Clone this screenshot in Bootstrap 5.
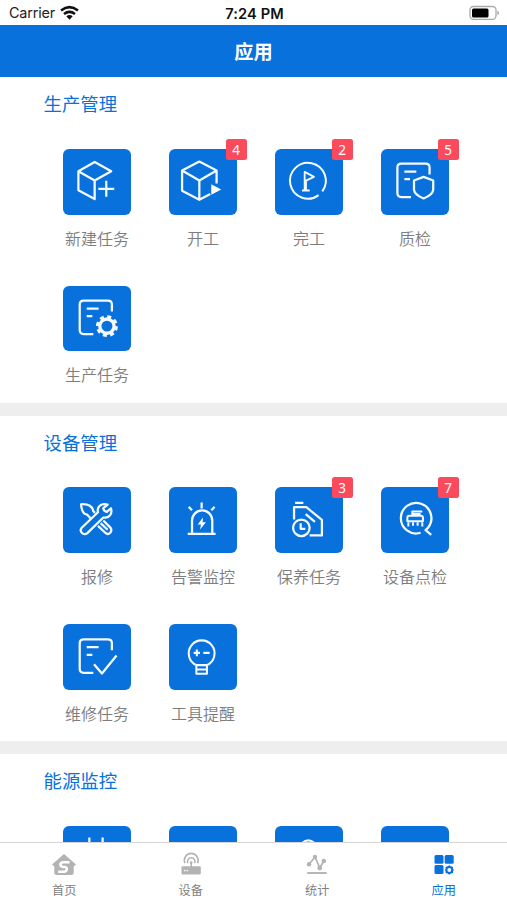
<!DOCTYPE html>
<html lang="zh-CN">
<head>
<meta charset="utf-8">
<meta name="viewport" content="width=device-width, initial-scale=1">
<title>应用</title>
<link href="https://cdn.jsdelivr.net/npm/bootstrap@5.3.0/dist/css/bootstrap.min.css" rel="stylesheet">
<style>
  :root { --brand: #0871dc; }
  body { font-family: "Liberation Sans", "Noto Sans CJK SC", sans-serif; height: 900px; background: #fff; }
  .status-bar { height: 25.3px; padding: 0 7px 0 9px; font-family: Inter, sans-serif; color: #222; font-size: 14.4px; line-height: 27px; }
  .status-bar > div { flex: 1 1 0; }
  .carrier { letter-spacing: -.15px; }
  .clock { font-weight: 600; font-size: 14.6px; letter-spacing: .1px; color: #111; padding-top: 1px; }
  .title-bar { height: 52px; padding-top: 3px; background: var(--brand); font-size: 19.2px; line-height: 1; }
  .group-block { height: 338.5px; border-bottom: 13.5px solid #eee; }
  .group-title { padding: 13px 0 0 43.5px; height: 71.7px; font-size: 18.4px; line-height: 26px; color: var(--brand); font-family: "Noto Sans CJK SC", sans-serif; }
  .app-grid { width: 424px; margin-left: 44px; }
  .app-item { height: 136.7px; color: #7d7d7d; font-size: 16px; }
  .tile { width: 67.3px; height: 65.7px; border-radius: 6px; background: var(--brand); }
  .tile svg { width: 100%; height: 100%; display: block; fill: none; stroke: #f4faff; stroke-width: 6.8; stroke-linejoin: round; stroke-linecap: butt; }
  .app-name { padding-top: 11px; line-height: 24px; font-family: "Noto Sans CJK SC", sans-serif; font-weight: 350; }
  .count { top: -10px; right: -10px; width: 21px; height: 21px; border-radius: 2.5px; background: #fb4a5b; color: #fff; font: 13.5px/22px "Noto Sans", sans-serif; text-align: center; }
  .tabs-bottom { height: 58.5px; padding-left: 1px; border-top: 1px solid #d6d6d6; color: #7f7f7f; font-size: 12.2px; }
  .tabs-bottom a { color: inherit; padding-top: 9px; line-height: 18px; }
  .tabs-bottom a.current { color: var(--brand); }
  .tabs-bottom svg { width: 26px; height: 26px; display: block; margin-bottom: 4px; }
</style>
<script src="https://cdn.jsdelivr.net/npm/bootstrap@5.3.0/dist/js/bootstrap.bundle.min.js"></script>
</head>
<body class="d-flex flex-column overflow-hidden">
<svg class="d-none">
  <symbol id="doc" viewBox="0 0 202 198">
    <path d="M147 77V56Q147 44 135 44H62Q50 44 50 56V133Q50 145 62 145H91M71 68H107M71 91H88"/>
  </symbol>
</svg>

<header class="flex-shrink-0">
  <div class="status-bar d-flex">
    <div class="d-flex align-items-center"><span class="carrier">Carrier</span>
      <svg class="ms-1" width="21" height="16" viewBox="0 0 21 16" fill="none" stroke="#111" stroke-width="2.500"><path d="M2 5.500Q10.500-1.300 19 5.500M5 9Q10.500 4.700 16 9"/><path d="M7.300 11.200Q10.500 8.900 13.700 11.200L10.500 14.700Z" fill="#111" stroke="none"/></svg>
    </div>
    <div class="clock text-center text-nowrap">7:24 PM</div>
    <div class="d-flex align-items-center justify-content-end">
      <svg width="31" height="16" viewBox="0 0 31 16"><rect x="1" y="1.500" width="26" height="12.800" rx="3.500" fill="#fff" stroke="#aaa" stroke-width="1.300"/><rect x="3" y="3.500" width="16.500" height="8.900" rx="1.500"/><path d="M28.500 5.500q3 2.400 0 4.800z" fill="#999"/></svg>
    </div>
  </div>
  <h1 class="title-bar m-0 text-white fw-bold d-flex align-items-center justify-content-center">应用</h1>
</header>

<main class="flex-grow-1 overflow-hidden" style="min-height:0">
  <section class="group-block">
    <h2 class="group-title m-0 fw-normal">生产管理</h2>
    <div class="app-grid row row-cols-4 g-0">
      <div class="col app-item d-flex flex-column align-items-center">
        <div class="tile"><svg viewBox="0 0 202 198"><path d="M95 39L145 67L95 95L46 67ZM46 67V124L95 151V95M130 96V144M106 120H154"/></svg></div>
        <div class="app-name">新建任务</div>
      </div>
      <div class="col app-item d-flex flex-column align-items-center">
        <div class="tile position-relative"><svg viewBox="0 0 202 198"><path d="M143 104V65L91 38L39 65V126L91 153L124 136M39 65L91 95L143 65M91 95V153"/><path d="M127 106L157 122L127 138Z" fill="#fff" stroke="none"/></svg><span class="count position-absolute">4</span></div>
        <div class="app-name">开工</div>
      </div>
      <div class="col app-item d-flex flex-column align-items-center">
        <div class="tile position-relative"><svg viewBox="0 0 202 198"><path d="M142 128A54 54 0 1 0 131 139" stroke-width="6"/><path d="M89 125V69L117 84L90 97M93 97V125M81 125H104" stroke-width="5.500"/></svg><span class="count position-absolute">2</span></div>
        <div class="app-name">完工</div>
      </div>
      <div class="col app-item d-flex flex-column align-items-center">
        <div class="tile position-relative"><svg viewBox="0 0 202 198"><use href="#doc" x="-1" width="202" height="198"/><path d="M128 84L157 95V123Q155 138 128 149Q101 138 99 123V95Z"/></svg><span class="count position-absolute">5</span></div>
        <div class="app-name">质检</div>
      </div>
      <div class="col app-item d-flex flex-column align-items-center">
        <div class="tile"><svg viewBox="0 0 202 198"><use href="#doc" width="202" height="198"/><circle cx="132" cy="121" r="21.500" stroke-width="10"/><circle cx="132" cy="121" r="28.500" stroke-width="9" stroke-dasharray="12 10.380"/></svg></div>
        <div class="app-name">生产任务</div>
      </div>
    </div>
  </section>

  <section class="group-block">
    <h2 class="group-title m-0 fw-normal">设备管理</h2>
    <div class="app-grid row row-cols-4 g-0">
      <div class="col app-item d-flex flex-column align-items-center">
        <div class="tile"><svg viewBox="0 0 202 198"><path d="M56 123L105 76C101 58 115 48 134 53L121 64Q123 74 132 75L144 64C150 82 137 95 121 92L73 139C62 148 47 134 56 123Z"/><path d="M83 95L72 83C60 82 55 65 54 52C72 51 88 55 91 73L96 78M105 117L127 138Q135 145 142 138Q149 129 141 121L121 101M113 109L134 129"/></svg></div>
        <div class="app-name">报修</div>
      </div>
      <div class="col app-item d-flex flex-column align-items-center">
        <div class="tile"><svg viewBox="0 0 202 198"><path d="M69 141V101A30.500 30.500 0 0 1 130 101V141M56 141H140M98 47V65M59 60L69 70M137 60L127 70"/><path d="M102 92L86 113H96L93 128L111 106H101Z" fill="#fff" stroke="none"/></svg></div>
        <div class="app-name">告警监控</div>
      </div>
      <div class="col app-item d-flex flex-column align-items-center">
        <div class="tile position-relative"><svg viewBox="0 0 202 198"><path d="M60 48H85M57 98V61H94L141 99V146H104M92 82L120 105"/><circle cx="79" cy="123" r="25"/><path d="M77 109V126H91"/></svg><span class="count position-absolute">3</span></div>
        <div class="app-name">保养任务</div>
      </div>
      <div class="col app-item d-flex flex-column align-items-center">
        <div class="tile position-relative"><svg viewBox="0 0 202 198"><path d="M119 138A46 46 0 1 1 142 122L134 130L151 144"/><path d="M94 87V74H124M97 81H119M79 103V93Q79 87 85 87H120Q126 87 126 93V103ZM82 107V119M96 107V117M110 107V117M124 107V119" stroke-width="6"/></svg><span class="count position-absolute">7</span></div>
        <div class="app-name">设备点检</div>
      </div>
      <div class="col app-item d-flex flex-column align-items-center">
        <div class="tile"><svg viewBox="0 0 202 198"><use href="#doc" y="2" width="202" height="198"/><path d="M93 121L117 149L161 95"/></svg></div>
        <div class="app-name">维修任务</div>
      </div>
      <div class="col app-item d-flex flex-column align-items-center">
        <div class="tile"><svg viewBox="0 0 202 198"><path d="M82 124A39 39 0 1 1 114 124V150H82ZM82 124H114M82 137H114M74 87H93M83.500 77V97M103 87H122" stroke-width="6.200"/></svg></div>
        <div class="app-name">工具提醒</div>
      </div>
    </div>
  </section>

  <section>
    <h2 class="group-title m-0 fw-normal">能源监控</h2>
    <div class="app-grid row row-cols-4 g-0">
      <div class="col app-item d-flex flex-column align-items-center"><div class="tile"><svg viewBox="0 0 202 198"><path d="M79 35V65M119 35V65M60 65H138V90A39 39 0 0 1 60 90Z"/></svg></div></div>
      <div class="col app-item d-flex flex-column align-items-center"><div class="tile"></div></div>
      <div class="col app-item d-flex flex-column align-items-center"><div class="tile"><svg viewBox="0 0 202 198"><circle cx="100" cy="66" r="23"/></svg></div></div>
      <div class="col app-item d-flex flex-column align-items-center"><div class="tile"></div></div>
    </div>
  </section>
</main>

<nav class="tabs-bottom bg-white flex-shrink-0 row row-cols-4 g-0">
  <a href="#" class="col d-flex flex-column align-items-center text-decoration-none">
    <svg viewBox="0 0 26 26"><path d="M13 2L25 12.500L23.500 14H22.700V20.500Q22.700 23 20.200 23H5.800Q3.300 23 3.300 20.500V14H2.500L1 12.500Z" fill="#b3b3b3"/><path d="M18.500 10.200H12.500Q9.400 10.200 9.400 12.500Q9.400 14.600 12 14.900H13.700Q16.300 15.200 15.800 17.600Q15.300 19.800 12.800 19.800H7.200" fill="none" stroke="#fff" stroke-width="2.500"/></svg>首页</a>
  <a href="#" class="col d-flex flex-column align-items-center text-decoration-none">
    <svg viewBox="0 0 26 26" fill="none" stroke="#b3b3b3" stroke-width="1.600"><path d="M7 11.200A6.900 6.900 0 1 1 19.500 11.200M9.800 11.200A3.800 3.800 0 1 1 16.700 11.200"/><circle cx="13.200" cy="10.600" r="1.300" fill="#b3b3b3" stroke="none"/><path d="M13.200 10V15"/><rect x="3.500" y="14.300" width="19.300" height="8.200" rx="1" fill="#b3b3b3" stroke="none"/><path d="M6 18.600H7.500M8.500 18.600H10" stroke="#fff" stroke-width="1.200"/></svg>设备</a>
  <a href="#" class="col d-flex flex-column align-items-center text-decoration-none">
    <svg viewBox="0 0 26 26" fill="#b3b3b3" stroke="#b3b3b3"><path d="M5 12.300L11 5L15.800 16L19.800 9" fill="none" stroke-width="1.700"/><g stroke="none"><circle cx="5" cy="12.300" r="2.200"/><circle cx="11" cy="5" r="2.200"/><circle cx="15.800" cy="16" r="2.400"/><circle cx="19.800" cy="9" r="2.300"/></g><path d="M3.300 21H22.700" stroke-width="1.900"/></svg>统计</a>
  <a href="#" class="col current d-flex flex-column align-items-center text-decoration-none">
    <svg viewBox="0 0 26 26" fill="#0871dc"><rect x="3.500" y="3" width="9" height="8.800" rx="1.500"/><rect x="13.700" y="3" width="9" height="8.800" rx="1.500"/><rect x="3.500" y="13" width="9" height="9" rx="1.500"/><path d="M18.300 13.200L20 14.300L22 14.900V16.800L22.800 18L22 19.400V21L20 21.500L18.300 22.700L16.600 21.500L14.600 21V19.400L13.900 18L14.600 16.800V14.900L16.600 14.300Z"/><circle cx="18.300" cy="18" r="1.900" fill="#fff"/></svg>应用</a>
</nav>
</body>
</html>
